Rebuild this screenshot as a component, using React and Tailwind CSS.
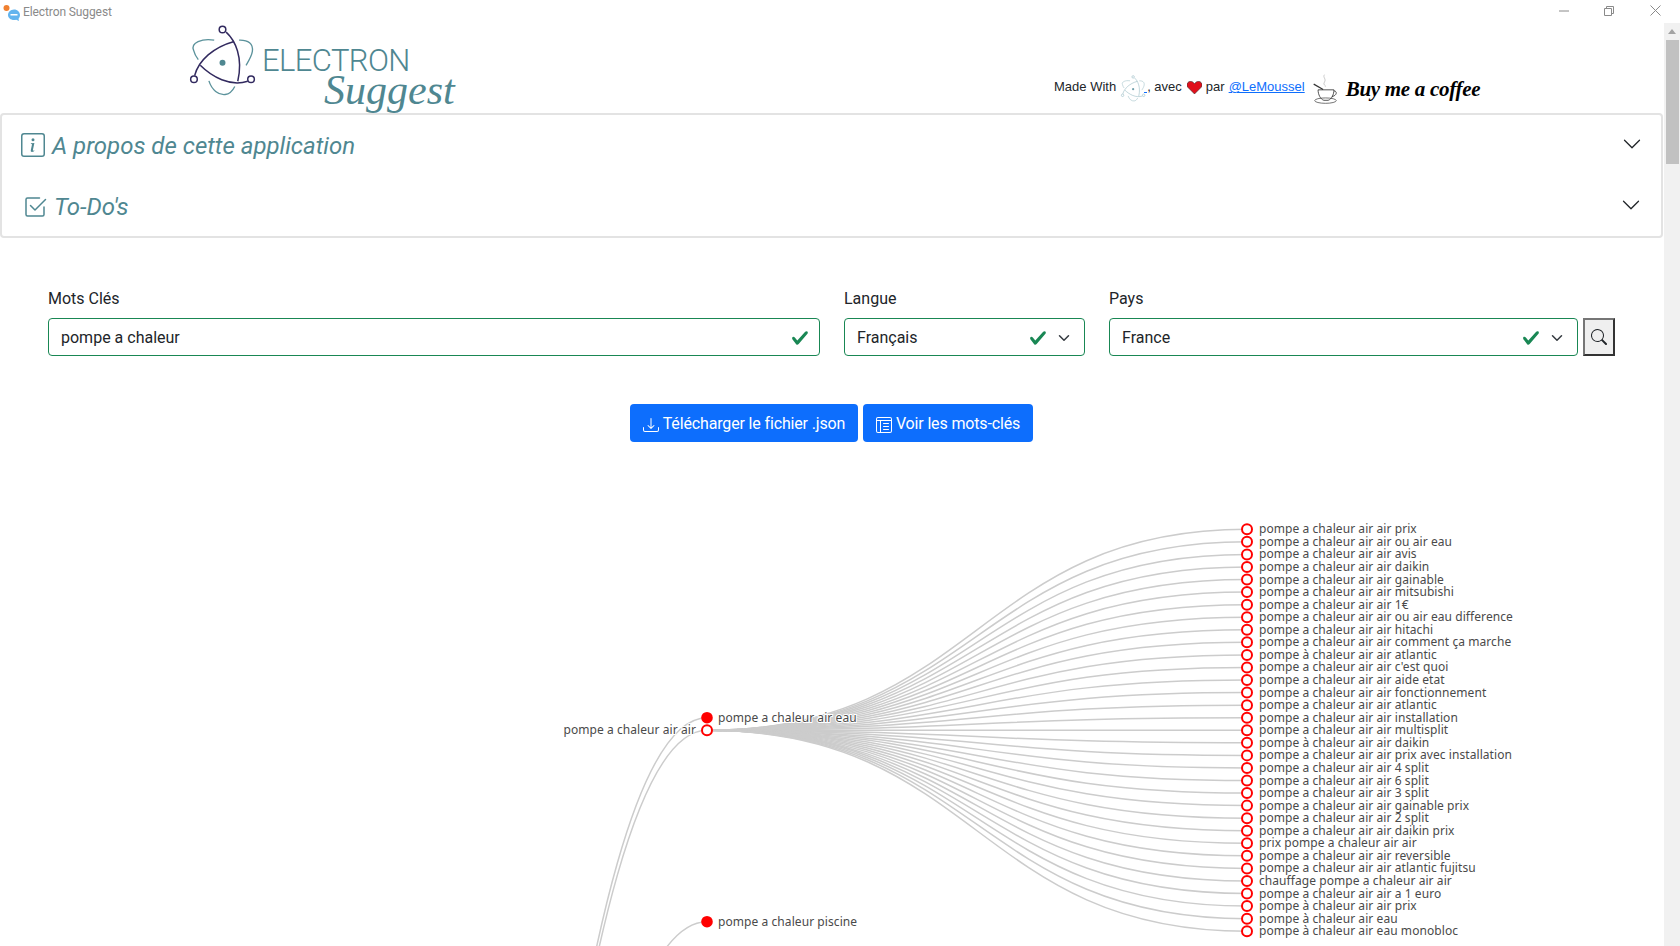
import React from "react";

const leaves = [
  "pompe a chaleur air air prix",
  "pompe a chaleur air air ou air eau",
  "pompe a chaleur air air avis",
  "pompe a chaleur air air daikin",
  "pompe a chaleur air air gainable",
  "pompe a chaleur air air mitsubishi",
  "pompe a chaleur air air 1€",
  "pompe a chaleur air air ou air eau difference",
  "pompe a chaleur air air hitachi",
  "pompe a chaleur air air comment ça marche",
  "pompe à chaleur air air atlantic",
  "pompe a chaleur air air c'est quoi",
  "pompe a chaleur air air aide etat",
  "pompe a chaleur air air fonctionnement",
  "pompe a chaleur air air atlantic",
  "pompe a chaleur air air installation",
  "pompe a chaleur air air multisplit",
  "pompe à chaleur air air daikin",
  "pompe a chaleur air air prix avec installation",
  "pompe a chaleur air air 4 split",
  "pompe a chaleur air air 6 split",
  "pompe a chaleur air air 3 split",
  "pompe a chaleur air air gainable prix",
  "pompe a chaleur air air 2 split",
  "pompe a chaleur air air daikin prix",
  "prix pompe a chaleur air air",
  "pompe a chaleur air air reversible",
  "pompe a chaleur air air atlantic fujitsu",
  "chauffage pompe a chaleur air air",
  "pompe a chaleur air air a 1 euro",
  "pompe à chaleur air air prix",
  "pompe à chaleur air eau",
  "pompe à chaleur air eau monobloc",
];

// chart coords are relative to the chart block, which starts at y=470
const CHART_TOP = 470;
const midX = 707;
const leafX = 1247;
const parentX = 167;
const parentY = 4100 - CHART_TOP;
const airY = 730.3 - CHART_TOP;
const eauY = 717.7 - CHART_TOP;
const piscineY = 921.7 - CHART_TOP;
const leafY = (i) => 529.3 - CHART_TOP + i * 12.56;

const curve = (x1, y1, x2, y2) => {
  const cx = (x1 + x2) / 2;
  return `M${x1} ${y1}C${cx} ${y1} ${cx} ${y2} ${x2} ${y2}`;
};

function Bi({ d, className }) {
  return (
    <svg viewBox="0 0 16 16" fill="currentColor" className={className}>
      {d.map((p) => (
        <path key={p} d={p} />
      ))}
    </svg>
  );
}

function Check({ className }) {
  return (
    <svg viewBox="0 0 8 8" className={className}>
      <path
        fill="#198754"
        d="M2.3 6.73.6 4.53c-.4-1.04.46-1.4 1.1-.8l1.1 1.4 3.4-3.8c.6-.63 1.6-.27 1.2.7l-4 4.6c-.43.5-.8.4-1.1.1z"
      />
    </svg>
  );
}

function SelectArrow() {
  return (
    <svg viewBox="0 0 16 16" className="w-4 h-3">
      <path fill="none" stroke="#343a40" strokeWidth="2" strokeLinecap="round" strokeLinejoin="round" d="M2 5l6 6 6-6" />
    </svg>
  );
}

function Atom({ className, ring, dark, core }) {
  return (
    <svg viewBox="50 20 220 225" fill="none" className={className}>
      <g stroke={ring} strokeWidth="4">
        <path d="M132 74C95 68 60 82 70 105C73 118 78 125 84 133" />
        <path d="M207 74C235 73 250 85 247 108C245 122 237 135 228 150" />
        <path d="M116 197C125 225 145 240 165 238C178 237 187 228 194 214" />
      </g>
      <g stroke={dark} strokeWidth="4.500">
        <path d="M168 50C195 75 220 125 203 198" />
        <path d="M73 181C85 135 130 95 192 78" />
        <path d="M90 150C125 185 180 215 233 198" />
        <circle cx="157" cy="42" r="10" fill="#fff" />
        <circle cx="71" cy="192" r="10" fill="#fff" />
        <circle cx="243" cy="192" r="10" fill="#fff" />
      </g>
      <circle cx="157" cy="142" r="9" fill={core} />
    </svg>
  );
}

function Chart() {
  return (
    <svg width="1664" height="476" className="block font-['Noto_Sans',sans-serif] text-[12px] tracking-[0.07px]">
      <g fill="none" stroke="#ccc" strokeWidth="1.5">
        <path d={curve(parentX, parentY, midX, eauY)} />
        <path d={curve(parentX, parentY, midX, airY)} />
        <path d={curve(parentX, parentY, midX, piscineY)} />
        {leaves.map((l, i) => (
          <path key={i} d={curve(midX, airY, leafX, leafY(i))} />
        ))}
      </g>
      {leaves.map((l, i) => (
        <g key={i}>
          <circle cx={leafX} cy={leafY(i)} r="5" fill="#fff" stroke="#f00" strokeWidth="2" />
          <text x="1259" y={leafY(i) + 4} fill="#4a4a4a">{l}</text>
        </g>
      ))}
      <circle cx={midX} cy={eauY} r="5.8" fill="#f00" />
      <circle cx={midX} cy={airY} r="5" fill="#fff" stroke="#f00" strokeWidth="2" />
      <circle cx={midX} cy={piscineY} r="5.8" fill="#f00" />
      <g fill="#4a4a4a" stroke="#fff" strokeWidth="2" paintOrder="stroke">
        <text x="718" y={eauY + 4}>pompe a chaleur air eau</text>
        <text x="696" y={airY + 4} textAnchor="end">pompe a chaleur air air</text>
        <text x="718" y={piscineY + 4}>pompe a chaleur piscine</text>
      </g>
    </svg>
  );
}

const chevron = "M1.646 4.646a.5.5 0 0 1 .708 0L8 10.293l5.646-5.647a.5.5 0 0 1 .708.708l-6 6a.5.5 0 0 1-.708 0l-6-6a.5.5 0 0 1 0-.708z";

export default function App() {
  return (
    <div className="h-screen w-full overflow-hidden bg-white flex flex-col font-['Roboto',sans-serif] text-[#212529]">
      {/* title bar */}
      <div className="h-[23px] shrink-0 flex items-center pl-[2px] text-[12px] text-[#8a8a8a]">
        <svg viewBox="0 0 18 18" className="w-[18px] h-[18px]">
          <path d="M12 6.500c3.600 0 6 2.500 6 5.500 0 1.500-.6 2.800-1.500 3.700l.5 2.300-2.800-1.300c-.7.200-1.400.3-2.200.3-3.500 0-6-2.300-6-5s2.500-5.500 6-5.500z" fill="#62b4ee" />
          <rect x="8.500" y="11" width="7" height="1.500" fill="#fff" />
          <circle cx="4.500" cy="5" r="3" fill="#f08030" />
        </svg>
        <span className="ml-[3px] tracking-[-0.1px]">Electron Suggest</span>
        <div className="ml-auto -mt-[2px] flex items-center text-[#8a8a8a]">
          <svg viewBox="0 0 10 10" className="w-[10px] h-[10px] mr-[35px]"><path d="M0 5h10" stroke="currentColor" /></svg>
          <svg viewBox="0 0 10 10" className="w-[10px] h-[10px] mr-[36px]" fill="none"><path d="M.5 2.500h7v7h-7zM2.500 2.500v-2h7v7h-2" stroke="currentColor" /></svg>
          <svg viewBox="0 0 11 11" className="w-[11px] h-[11px] mr-[19px]"><path d="M.5.5l10 10M10.500.5l-10 10" stroke="currentColor" /></svg>
        </div>
      </div>

      <div className="flex-1 min-h-0 flex">
        <div className="flex-1 min-w-0">
          {/* header */}
          <div className="h-[90px] flex">
            <div className="ml-[187px] flex w-[292px]">
              <Atom ring="#5b929b" dark="#322a5f" core="#4f8791" className="w-[73px] h-[75px] shrink-0 -mt-[1px]" />
              <div className="ml-[2px] mt-[26px] flex flex-col text-[#4f8791]">
                <div className="font-light text-[31px] leading-[24px] tracking-[-0.6px]">ELECTRON</div>
                <div className="ml-[62px] mt-[1px] font-['Liberation_Serif',serif] italic text-[42px] leading-[32px]">Suggest</div>
              </div>
            </div>
            <div className="ml-[575px] mt-[48px] h-[32px] flex items-center font-['Liberation_Sans',sans-serif] text-[13px] whitespace-nowrap">
              <span>Made With</span>
              <Atom ring="#8fb6c0" dark="#8fb6c0" core="#6f9fab" className="w-[27px] h-[28px] ml-[4px] mt-[2px] shrink-0" />
              <div className="w-[3px] h-px -ml-[3px] mt-[10px] bg-[#0d6efd]" />
              <span>, avec</span>
              <svg viewBox="0 0 16 14" className="w-[15px] h-[13px] ml-[5px] mr-[4px]">
                <path d="M8 14L1 7a4 4 0 0 1 0-5.500C3-.5 6 0 8 3c2-3 5-3.500 7-1.500A4 4 0 0 1 15 7z" fill="#e0101c" stroke="#333" strokeWidth=".6" />
              </svg>
              <span>par</span>
              <a className="ml-[4px] text-[#0d6efd] underline">@LeMoussel</a>
              <svg viewBox="15 5 80 95" fill="none" stroke="#333" className="w-[27px] h-[32px] ml-[7px] mt-[4px] shrink-0">
                <path d="M52 10c-6 8 6 12 0 22s6 8 2 14" strokeWidth="1.500" stroke="#999" />
                <path d="M20 38l28 16" strokeWidth="3.500" />
                <path d="M33 55h47c0 14-7 28-17 31H50c-10-3-17-17-17-31z" strokeWidth="2.500" />
                <path d="M80 58c10 0 10 14-6 17" strokeWidth="2.500" />
                <ellipse cx="55" cy="87" rx="32" ry="8" strokeWidth="2" />
              </svg>
              <span className="ml-[7px] font-['Liberation_Serif',serif] italic font-bold text-[21px] leading-[30px] tracking-[-0.3px] text-black mt-[4px]">Buy me a coffee</span>
            </div>
          </div>

          {/* accordion */}
          <div className="h-[125px] mr-[1px] border-2 border-[#e3e3e3] rounded-[4px] italic text-[24px] text-[#4f8791]">
            <div className="h-[58px] mt-[2px] flex items-center pl-[19px] pr-[19px]">
              <Bi className="w-6 h-6 shrink-0 -mt-[2px]" d={["M14 1a1 1 0 0 1 1 1v12a1 1 0 0 1-1 1H2a1 1 0 0 1-1-1V2a1 1 0 0 1 1-1h12zM2 0a2 2 0 0 0-2 2v12a2 2 0 0 0 2 2h12a2 2 0 0 0 2-2V2a2 2 0 0 0-2-2H2z", "m8.930 6.588-2.290.287-.082.380.450.083c.294.070.352.176.288.469l-.738 3.468c-.194.897.105 1.319.808 1.319.545 0 1.178-.252 1.465-.598l.088-.416c-.2.176-.492.246-.686.246-.275 0-.375-.193-.304-.533L8.930 6.588zM9 4.500a1 1 0 1 1-2 0 1 1 0 0 1 2 0z"]} />
              <span className="ml-[7px]">A propos de cette application</span>
              <Bi className="ml-auto w-5 h-5 text-[#212529] -mt-[4px]" d={[chevron]} />
            </div>
            <div className="h-[61px] pt-[2px] flex items-center pl-[21px] pr-[20px]">
              <Bi className="w-6 h-6 shrink-0" d={["M3 14.500A1.500 1.500 0 0 1 1.500 13V3A1.500 1.500 0 0 1 3 1.500h8a.5.5 0 0 1 0 1H3a.5.5 0 0 0-.5.5v10a.5.5 0 0 0 .5.5h10a.5.5 0 0 0 .5-.5V8a.5.5 0 0 1 1 0v5a1.500 1.500 0 0 1-1.500 1.500H3z", "m8.354 10.354 7-7a.5.5 0 0 0-.708-.708L8 9.293 5.354 6.646a.5.5 0 1 0-.708.708l3 3a.5.5 0 0 0 .708 0z"]} />
              <span className="ml-[7px]">To-Do's</span>
              <Bi className="ml-auto w-5 h-5 text-[#212529] -mt-[3px]" d={[chevron]} />
            </div>
          </div>

          {/* form */}
          <div className="mt-[49px] pl-[48px] flex gap-[24px] text-[16px]">
            <div className="w-[772px]">
              <div className="h-[24px] leading-[24px] mb-[7px]">Mots Clés</div>
              <div className="h-[38px] pt-[1px] border border-[#198754] rounded-[4px] flex items-center pl-[12px] pr-[10px]">
                pompe a chaleur
                <Check className="ml-auto w-[18px] h-[18px]" />
              </div>
            </div>
            <div className="w-[241px]">
              <div className="h-[24px] leading-[24px] mb-[7px]">Langue</div>
              <div className="h-[38px] pt-[1px] border border-[#198754] rounded-[4px] flex items-center pl-[12px] pr-[12px]">
                Français
                <Check className="ml-auto w-[18px] h-[18px] mr-[9px]" />
                <SelectArrow />
              </div>
            </div>
            <div>
              <div className="h-[24px] leading-[24px] mb-[7px]">Pays</div>
              <div className="flex gap-[5px]">
                <div className="w-[469px] h-[38px] pt-[1px] border border-[#198754] rounded-[4px] flex items-center pl-[12px] pr-[12px]">
                  France
                  <Check className="ml-auto w-[18px] h-[18px] mr-[9px]" />
                  <SelectArrow />
                </div>
                <button className="w-[32px] h-[38px] bg-[#efefef] border-2 border-t-[#767676] border-l-[#767676] border-b-[#333] border-r-[#333] flex items-center justify-center">
                  <Bi className="w-4 h-4" d={["M11.742 10.344a6.500 6.500 0 1 0-1.397 1.398h-.001c.030.040.062.078.098.115l3.850 3.850a1 1 0 0 0 1.415-1.414l-3.850-3.850a1.007 1.007 0 0 0-.115-.1zM12 6.500a5.500 5.500 0 1 1-11 0 5.500 5.500 0 0 1 11 0z"]} />
                </button>
              </div>
            </div>
          </div>

          {/* actions */}
          <div className="mt-[48px] ml-[630px] flex gap-[5px] text-[16px] text-white tracking-[-0.15px]">
            <button className="w-[228px] h-[38px] pt-[1px] bg-[#0d6efd] rounded-[4px] flex items-center justify-center gap-[4px]">
              <Bi className="w-4 h-4 mt-[3px]" d={["M.5 9.900a.5.5 0 0 1 .5.5v2.500a1 1 0 0 0 1 1h12a1 1 0 0 0 1-1v-2.500a.5.5 0 0 1 1 0v2.500a2 2 0 0 1-2 2H2a2 2 0 0 1-2-2v-2.500a.5.5 0 0 1 .5-.5z", "M7.646 11.854a.5.5 0 0 0 .708 0l3-3a.5.5 0 0 0-.708-.708L8.500 10.293V1.500a.5.5 0 0 0-1 0v8.793L5.354 8.146a.5.5 0 1 0-.708.708l3 3z"]} />
              Télécharger le fichier .json
            </button>
            <button className="w-[170px] h-[38px] pt-[1px] bg-[#0d6efd] rounded-[4px] flex items-center justify-center gap-[4px]">
              <Bi className="w-4 h-4 mt-[3px]" d={["M13 6.500a.5.5 0 0 0-.5-.5h-5a.5.5 0 0 0 0 1h5a.5.5 0 0 0 .5-.5zm0 3a.5.5 0 0 0-.5-.5h-5a.5.5 0 0 0 0 1h5a.5.5 0 0 0 .5-.5zm-.5 2.500a.5.5 0 0 1 0 1h-5a.5.5 0 0 1 0-1h5z", "M14 0a2 2 0 0 1 2 2v12a2 2 0 0 1-2 2H2a2 2 0 0 1-2-2V2a2 2 0 0 1 2-2h12zM2 1a1 1 0 0 0-1 1v1h14V2a1 1 0 0 0-1-1H2zM1 4v10a1 1 0 0 0 1 1h2V4H1zm4 0v11h9a1 1 0 0 0 1-1V4H5z"]} />
              Voir les mots-clés
            </button>
          </div>

          <div className="mt-[28px]">
            <Chart />
          </div>
        </div>

        {/* scrollbar */}
        <div className="w-4 shrink-0 bg-[#f1f1f1] flex flex-col items-center">
          <div className="h-[17px] flex items-center justify-center">
            <div className="w-0 h-0 border-x-[4px] border-x-transparent border-b-[5px] border-b-[#a3a3a3]" />
          </div>
          <div className="w-[13px] h-[124px] bg-[#c1c1c1]" />
        </div>
      </div>
    </div>
  );
}
